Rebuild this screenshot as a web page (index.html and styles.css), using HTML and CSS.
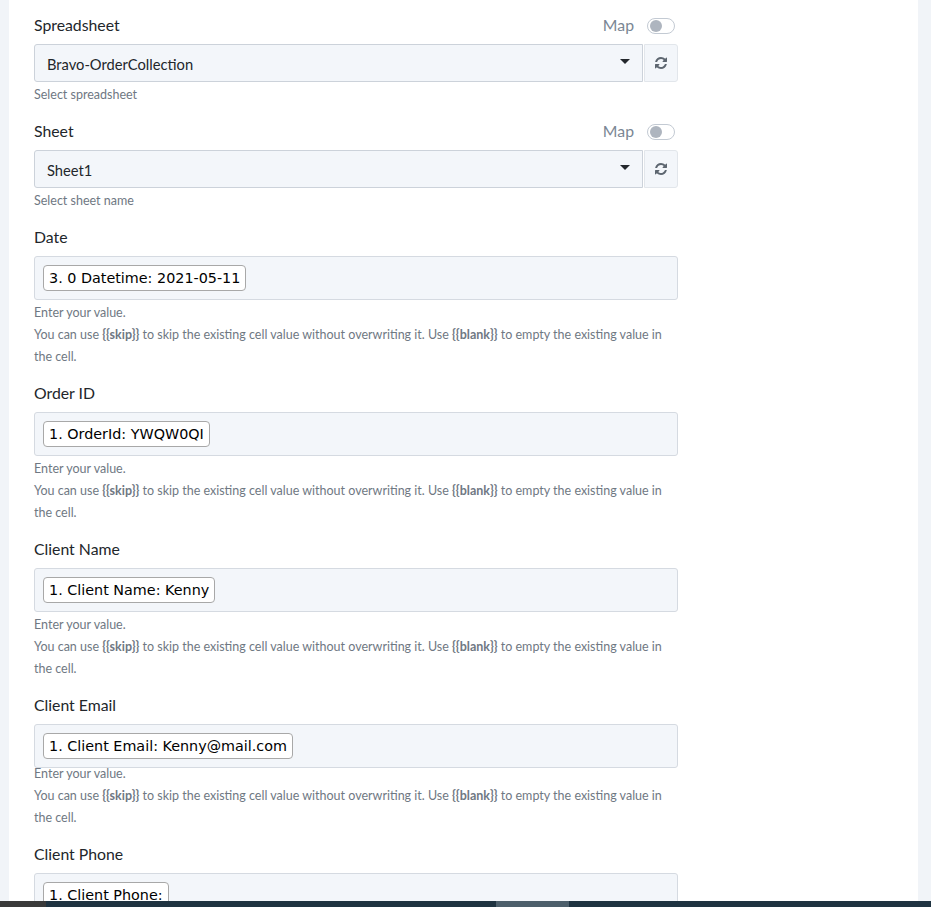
FILE: index.html
```html
<!DOCTYPE html>
<html lang="en">
<head>
    <meta charset="UTF-8">
    <meta name="viewport" content="width=device-width, initial-scale=1.0">
    <title>Update Row</title>
    <link rel="stylesheet" href="styles.css">
</head>
<body>
    <main class="panel">
        <div class="field">
            <div class="field-head">
                <label>Spreadsheet</label>
                <div class="map-toggle"><span>Map</span><i class="switch"></i></div>
            </div>
            <div class="select-row">
                <div class="select">Bravo-OrderCollection<i class="caret"></i></div>
                <button type="button" class="refresh">
                    <svg viewBox="0 0 1536 1536" width="12" height="12"><path d="M1511 928q0 5-1 7-64 268-268 434.5t-478 166.5q-146 0-282.5-55t-243.5-157l-129 129q-19 19-45 19t-45-19-19-45v-448q0-26 19-45t45-19h448q26 0 45 19t19 45-19 45l-137 137q71 66 161 102t187 36q134 0 250-65t186-179q11-17 53-117 8-23 30-23h192q13 0 22.5 9.5t9.5 22.5zm25-800v448q0 26-19 45t-45 19h-448q-26 0-45-19t-19-45 19-45l138-138q-148-137-349-137-134 0-250 65t-186 179q-11 17-53 117-8 23-30 23h-199q-13 0-22.5-9.5t-9.5-22.5v-7q65-268 270-434.5t480-166.5q146 0 284 55.5t245 156.5l130-129q19-19 45-19t45 19 19 45z"/></svg>
                </button>
            </div>
            <p class="hint">Select spreadsheet</p>
        </div>

        <div class="field">
            <div class="field-head">
                <label>Sheet</label>
                <div class="map-toggle"><span>Map</span><i class="switch"></i></div>
            </div>
            <div class="select-row">
                <div class="select">Sheet1<i class="caret"></i></div>
                <button type="button" class="refresh">
                    <svg viewBox="0 0 1536 1536" width="12" height="12"><path d="M1511 928q0 5-1 7-64 268-268 434.5t-478 166.5q-146 0-282.5-55t-243.5-157l-129 129q-19 19-45 19t-45-19-19-45v-448q0-26 19-45t45-19h448q26 0 45 19t19 45-19 45l-137 137q71 66 161 102t187 36q134 0 250-65t186-179q11-17 53-117 8-23 30-23h192q13 0 22.5 9.5t9.5 22.5zm25-800v448q0 26-19 45t-45 19h-448q-26 0-45-19t-19-45 19-45l138-138q-148-137-349-137-134 0-250 65t-186 179q-11 17-53 117-8 23-30 23h-199q-13 0-22.5-9.5t-9.5-22.5v-7q65-268 270-434.5t480-166.5q146 0 284 55.5t245 156.5l130-129q19-19 45-19t45 19 19 45z"/></svg>
                </button>
            </div>
            <p class="hint">Select sheet name</p>
        </div>

        <div class="field">
            <div class="field-head"><label>Date</label></div>
            <div class="token-box"><span class="token">3. 0 Datetime: 2021-05-11</span></div>
            <p class="hint">Enter your value.</p>
            <p class="hint">You can use <b>{{skip}}</b> to skip the existing cell value without overwriting it. Use <b>{{blank}}</b> to empty the existing value in the cell.</p>
        </div>

        <div class="field">
            <div class="field-head"><label>Order ID</label></div>
            <div class="token-box"><span class="token">1. OrderId: YWQW0QI</span></div>
            <p class="hint">Enter your value.</p>
            <p class="hint">You can use <b>{{skip}}</b> to skip the existing cell value without overwriting it. Use <b>{{blank}}</b> to empty the existing value in the cell.</p>
        </div>

        <div class="field">
            <div class="field-head"><label>Client Name</label></div>
            <div class="token-box"><span class="token">1. Client Name: Kenny</span></div>
            <p class="hint">Enter your value.</p>
            <p class="hint">You can use <b>{{skip}}</b> to skip the existing cell value without overwriting it. Use <b>{{blank}}</b> to empty the existing value in the cell.</p>
        </div>

        <div class="field field-tight">
            <div class="field-head"><label>Client Email</label></div>
            <div class="token-box"><span class="token">1. Client Email: Kenny@mail.com</span></div>
            <p class="hint">Enter your value.</p>
            <p class="hint">You can use <b>{{skip}}</b> to skip the existing cell value without overwriting it. Use <b>{{blank}}</b> to empty the existing value in the cell.</p>
        </div>

        <div class="field">
            <div class="field-head"><label>Client Phone</label></div>
            <div class="token-box"><span class="token">1. Client Phone:</span></div>
        </div>
    </main>

    <!-- horizontal scrollbar at the bottom of the window -->
    <div class="scrollbar"><i class="scroll-start"></i><i class="scroll-thumb"></i></div>
</body>
</html>
```

FILE: styles.css
```css
body {
    margin: 0;
    height: 907px;
    overflow: hidden;
    position: relative;
    background-color: #f1f4f8;
    font-family: Lato, "Open Sans", Arial, sans-serif;
    color: #2a2f36;
}
.panel {
    box-sizing: border-box;
    width: 909px;
    height: 907px;
    margin-left: 9px;
    padding: 14px 25px 0;
    background-color: white;
    overflow: hidden;
}

.field {
    width: 644px;
    margin-bottom: 14px;
}
.field-head {
    display: flex;
    justify-content: space-between;
    align-items: center;
    height: 20px;
    margin-bottom: 10px;
}
.field-head label {
    font-size: 15.8px;
    color: #22262b;
}
.map-toggle {
    display: flex;
    align-items: center;
    gap: 13px;
    font-size: 15.8px;
    color: #7a8694;
}
.switch {
    display: block;
    position: relative;
    box-sizing: border-box;
    width: 28px;
    height: 16px;
    margin-top: 4px;
    margin-right: 3px;
    border: 1px solid #c3cad3;
    border-radius: 8px;
    background-color: white;
}
.switch::before {
    content: "";
    position: absolute;
    left: 2px;
    top: 1px;
    width: 12px;
    height: 12px;
    border-radius: 50%;
    background-color: #aeb5bf;
}

.select-row {
    display: flex;
    gap: 1px;
    margin-bottom: 2px;
}
.select {
    box-sizing: border-box;
    flex: 1;
    position: relative;
    height: 38px;
    line-height: 38px;
    padding-left: 12px;
    font-size: 14.7px;
    color: #22262b;
    background-color: #f3f6fa;
    border: 1px solid #ccd2da;
    border-radius: 3px 0 0 3px;
}
.caret {
    position: absolute;
    right: 12px;
    top: 14px;
    border-left: 5px solid transparent;
    border-right: 5px solid transparent;
    border-top: 5px solid #23272c;
}
.refresh {
    box-sizing: border-box;
    width: 34px;
    height: 38px;
    padding: 0;
    display: flex;
    align-items: center;
    justify-content: center;
    background-color: #f3f6fa;
    border: 1px solid #e2e6eb;
    border-radius: 0 3px 3px 0;
}
.refresh svg {
    fill: #5d6670;
}

.token-box {
    box-sizing: border-box;
    height: 44px;
    margin-bottom: 2px;
    padding: 8px 8px;
    background-color: #f3f6fa;
    border: 1px solid #d5dae1;
    border-radius: 3px;
}
.field-tight .token-box {
    margin-bottom: -5px;
}
.token {
    display: inline-block;
    box-sizing: border-box;
    height: 26px;
    line-height: 24px;
    padding: 0 5px;
    font-family: "DejaVu Sans", Verdana, sans-serif;
    font-size: 14.35px;
    color: black;
    background-color: white;
    border: 1px solid #a8a8a8;
    border-radius: 4px;
    white-space: nowrap;
}
.hint {
    margin: 0;
    font-size: 12.5px;
    line-height: 22px;
    color: #6f7883;
}
.hint b {
    font-weight: 700;
}

.scrollbar {
    position: absolute;
    left: 0;
    right: 0;
    bottom: 0;
    height: 6px;
    background-color: #1f3341;
}
.scroll-start {
    position: absolute;
    left: 0;
    top: 0;
    width: 46px;
    height: 6px;
    background-color: #3a3a3a;
}
.scroll-thumb {
    position: absolute;
    left: 496px;
    top: 0;
    width: 73px;
    height: 6px;
    background-color: #4d5f6b;
}
```
